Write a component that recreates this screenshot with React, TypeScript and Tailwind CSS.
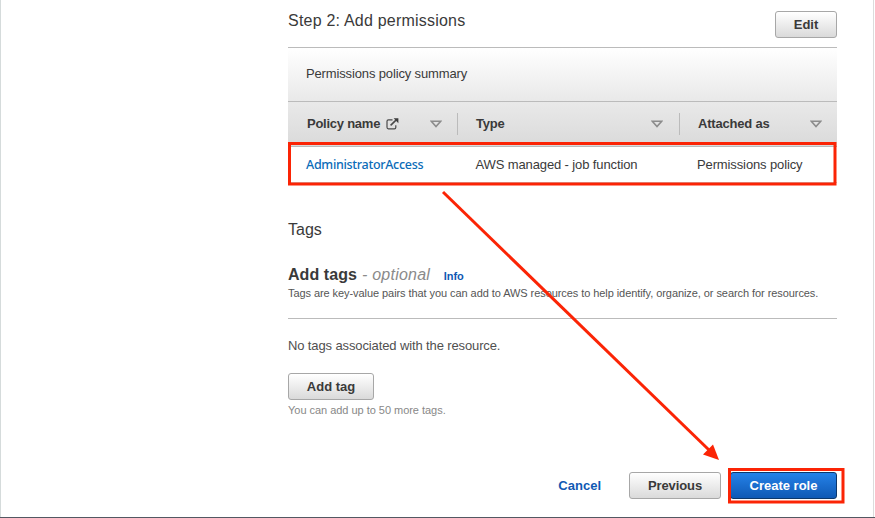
import { ReactNode } from "react";

function Button({ className, children }: { className: string; children: ReactNode }) {
  return (
    <button
      className={`flex h-[27px] items-center justify-center rounded-[3px] border text-[13px] font-bold ${className}`}
    >
      {children}
    </button>
  );
}

const GREY = "border-[#a7a7a7] bg-linear-to-b from-white to-[#dadada] text-[#3a3a3a]";

function SortIcon() {
  return (
    <svg width="12" height="8" viewBox="0 0 12 8" fill="none" stroke="#8c8c8c" strokeWidth="1.6">
      <path d="M1.3 1.2h9.4L6 6.6z" />
    </svg>
  );
}

function ExternalIcon() {
  return (
    <svg width="13" height="12" viewBox="0 0 13 12" fill="none" stroke="#4a4a4a" strokeWidth="1.2">
      <path d="M6.5 1.9H2.4Q1 1.9 1 3.3v6Q1 10.8 2.4 10.8h6Q9.8 10.8 9.8 9.4V7.2" />
      <path d="M4.6 7.3 10 2.2" strokeWidth="1.6" />
      <path d="M7.6 .3h4.8v4.9z" fill="#3c3c3c" stroke="none" />
    </svg>
  );
}

export default function App() {
  return (
    <div className="relative h-[518px] w-[875px] overflow-hidden bg-white font-['Liberation_Sans',Arial,sans-serif] text-[#3a3a3a]">
      <div className="flex h-[517px] w-[874px] flex-col border-x border-l-[#d5dbdb] border-r-[#dcdcdc] pl-[287px] whitespace-nowrap">
        <section className="w-[549px]">
          <header className="flex h-[48px] items-start justify-between border-b border-[#bbb]">
            <h2 className="mt-[11px] text-[16px] leading-[20px] tracking-[0.21px]">Step 2: Add permissions</h2>
            <Button className={`mt-[11px] w-[62px] ${GREY}`}>Edit</Button>
          </header>
          <div className="flex h-[54px] items-center border-b border-[#bbb] bg-linear-to-b from-white to-[#e9e9e9] pb-[2px] pl-[18px] text-[13px] tracking-[-0.14px]">
            Permissions policy summary
          </div>
          <div className="flex h-[45px] items-center border-b border-[#bbb] bg-linear-to-b from-[#e9e9e9] to-[#dadada] text-[13px] font-bold">
            <div className="flex h-[22px] w-[170px] items-center border-r border-[#bbb] pr-[15px] pl-[19px]">
              <span className="mr-[6px] tracking-[-0.25px]">Policy name</span>
              <ExternalIcon />
              <span className="ml-auto"><SortIcon /></span>
            </div>
            <div className="flex h-[22px] w-[222px] items-center justify-between border-r border-[#bbb] pr-[16px] pl-[18px] tracking-[-0.2px]">
              Type <SortIcon />
            </div>
            <div className="flex h-[22px] w-[157px] items-center justify-between pr-[15px] pl-[18px] tracking-[-0.2px]">
              Attached as <SortIcon />
            </div>
          </div>
          <div className="flex h-[36px] items-center border-b border-[#ccc] text-[13px] tracking-[-0.12px]">
            <a className="w-[187.5px] pt-[2px] pl-[18px] font-['Noto_Sans',sans-serif] text-[12.5px] font-medium tracking-[-0.3px] text-[#0b6cb8]">AdministratorAccess</a>
            <span className="w-[221.5px]">AWS managed - job function</span>
            <span>Permissions policy</span>
          </div>
        </section>

        <section className="w-[549px]">
          <h2 className="mt-[37px] text-[16px] leading-[20px]">Tags</h2>
          <h3 className="mt-[25px] flex items-baseline text-[16px] leading-[20px]">
            <b className="tracking-[0.06px]">Add tags</b>
            <i className="ml-[5px] tracking-[0.24px] text-[#8a8a8a]">- optional</i>
            <a className="ml-[13.5px] text-[11px] font-bold text-[#1059b3]">Info</a>
          </h3>
          <p className="h-[33px] border-b border-[#bbb] text-[11px] leading-[14px] tracking-[-0.07px] text-[#555]">
            Tags are key-value pairs that you can add to AWS resources to help identify, organize, or search for resources.
          </p>
          <p className="mt-[19px] text-[13px] leading-[16px] tracking-[-0.12px] text-[#505050]">No tags associated with the resource.</p>
          <Button className={`mt-[19px] w-[86px] ${GREY}`}>Add tag</Button>
          <p className="mt-[2px] text-[11px] leading-[16px] tracking-[-0.03px] text-[#888]">You can add up to 50 more tags.</p>
        </section>

        <footer className="mt-[54px] flex w-[549px] items-center justify-end">
          <a className="mr-[28px] text-[13px] font-bold text-[#1059b3]">Cancel</a>
          <Button className={`mr-[9px] w-[92px] tracking-[-0.1px] ${GREY}`}>Previous</Button>
          <Button className="w-[107px] border-[#0c376b] bg-linear-to-b from-[#2582e8] to-[#0f59b5] text-white">Create role</Button>
        </footer>
      </div>
      <div className="h-px bg-[#545862]" />

      {/* Annotations over the page */}
      <svg className="absolute inset-0" width="875" height="518" fill="none" stroke="#fb2405" strokeWidth="3">
        <path d="M289.5 143.5h545.5v40.5h-545.5z" />
        <path d="M729.5 469.5h113.5v32.5h-113.5z" />
        <path d="M443 192 709 450" />
        <path d="M719 460 713 444.5 703 454.5z" fill="#fb2405" stroke="none" />
      </svg>
    </div>
  );
}
